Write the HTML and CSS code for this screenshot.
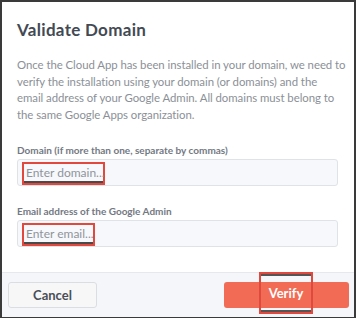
FILE: index.html
```html
<!DOCTYPE html>
<html lang="en">
<head>
  <meta charset="UTF-8">
  <meta name="viewport" content="width=device-width, initial-scale=1.0">
  <title>Validate Domain</title>
  <link rel="stylesheet" href="styles.css">
</head>
<body>
  <div class="frame">
    <div class="modal-body">
      <h1>Validate Domain</h1>
      <p class="intro">Once the Cloud App has been installed in your domain, we need to verify the installation using your domain (or domains) and the email address of your Google Admin. All domains must belong to the same Google Apps organization.</p>

      <div class="field">
        <label for="domain">Domain (if more than one, separate by commas)</label>
        <div class="input">
          <span class="mark mark-domain">Enter domain...</span>
        </div>
      </div>

      <div class="field">
        <label for="email">Email address of the Google Admin</label>
        <div class="input">
          <span class="mark mark-email">Enter email...</span>
        </div>
      </div>
    </div>

    <div class="modal-footer">
      <button class="btn btn-cancel">Cancel</button>
      <button class="btn btn-verify"><span class="mark mark-verify">Verify</span></button>
    </div>
  </div>
</body>
</html>
```

FILE: styles.css
```css
* {
  margin: 0;
  padding: 0;
  box-sizing: border-box;
}

body {
  font-family: Lato, "Open Sans", sans-serif;
  background-color: #fff;
  color: #3d4550;
}

.frame {
  width: 356px;
  height: 318px;
  border: 2px solid #3a3a3a;
  border-bottom-width: 1px;
  display: flex;
  flex-direction: column;
  background-color: #fff;
}

.modal-body {
  flex: 1;
  padding: 17px 8px 0 15px;
}

h1 {
  font-size: 17px;
  font-weight: 700;
  color: #434a54;
  letter-spacing: 0.3px;
  line-height: 22px;
}

.intro {
  margin-top: 16px;
  font-size: 11.4px;
  letter-spacing: -0.05px;
  line-height: 16.5px;
  color: #8b9097;
}

.field {
  margin-top: 21px;
}

.field + .field {
  margin-top: 19px;
}

label {
  display: block;
  font-size: 10px;
  font-weight: 700;
  color: #737983;
  line-height: 12px;
  margin-bottom: 3px;
}

.input {
  width: 321px;
  height: 27px;
  background-color: #f7f8fb;
  border: 1px solid #dfe2e7;
  border-radius: 3px;
  padding: 1px 0 0 4px;
}

.mark {
  display: inline-block;
  white-space: nowrap;
  border: 2px solid #e2493e;
  box-shadow: inset 0 -2px 0 #4a4a4a;
}

.mark-domain,
.mark-email {
  font-size: 12px;
  color: #8f949b;
  padding: 0 0 0 2px;
  height: 23px;
  line-height: 18px;
}

.mark-domain {
  width: 83px;
}

.mark-email {
  width: 73px;
}

.modal-footer {
  height: 45px;
  background-color: #f5f6f9;
  border-top: 1px solid #e6e8ec;
  display: flex;
  justify-content: space-between;
  align-items: center;
  padding: 0 5px 0 6px;
}

.btn {
  height: 26px;
  border-radius: 3px;
  font-family: Lato, "Open Sans", sans-serif;
  font-size: 13px;
  font-weight: 700;
  position: relative;
}

.btn-cancel {
  width: 89px;
  background-color: #f7f7f8;
  border: 1px solid #dadde2;
  color: #4a4f57;
}

.btn-verify {
  width: 125px;
  background-color: #f26b55;
  border: none;
  color: #fff;
}

.mark-verify {
  position: absolute;
  left: 35px;
  top: -10px;
  width: 54px;
  height: 42px;
  line-height: 38px;
  box-shadow: inset 0 2px 0 #555, inset 0 -2px 0 #555;
}
```
